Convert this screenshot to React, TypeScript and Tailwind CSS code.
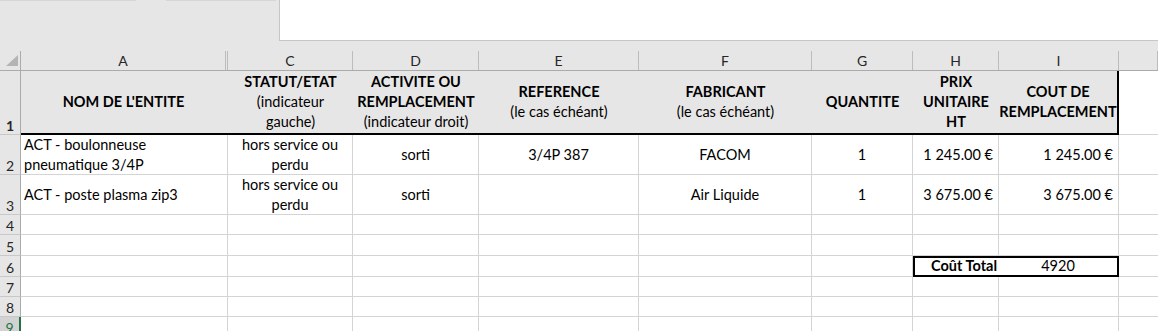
import React from "react"

const cols = "grid grid-cols-[21px_205px_2px_125px_126px_160px_173px_101px_86px_120px_1fr]"

const letters = ["A", "", "C", "D", "E", "F", "G", "H", "I", ""]

type Row = {
  n: number
  h: string
  a?: React.ReactNode
  c?: React.ReactNode
  d?: string
  e?: string
  f?: string
  g?: string
  hh?: string
  i?: string
  total?: boolean
}

const rows: Row[] = [
  {
    n: 2,
    h: "h-[40px]",
    a: (
      <>
        ACT - boulonneuse
        <br />
        pneumatique 3/4P
      </>
    ),
    c: (
      <>
        hors service ou
        <br />
        perdu
      </>
    ),
    d: "sorti",
    e: "3/4P 387",
    f: "FACOM",
    g: "1",
    hh: "1 245.00 €",
    i: "1 245.00 €",
  },
  {
    n: 3,
    h: "h-[40px]",
    a: "ACT - poste plasma zip3",
    c: (
      <>
        hors service ou
        <br />
        perdu
      </>
    ),
    d: "sorti",
    f: "Air Liquide",
    g: "1",
    hh: "3 675.00 €",
    i: "3 675.00 €",
  },
  { n: 4, h: "h-[20px]" },
  { n: 5, h: "h-[21px]" },
  { n: 6, h: "h-[21px]", total: true },
  { n: 7, h: "h-[20px]" },
  { n: 8, h: "h-[20px]" },
]

const cell = "border-r border-b border-[#d4d4d4] flex items-center overflow-hidden whitespace-nowrap"

function RowNum({ n, active }: { n: number; active?: boolean }) {
  return (
    <div
      className={
        "flex items-end justify-center pb-[1px] text-[14px] leading-none border-b border-[#c8c8c8] " +
        (active
          ? "bg-[#d2d2d2] text-[#217346] border-r-2 border-r-[#217346]"
          : "bg-[#e6e6e6] text-[#262626] border-r border-r-[#ababab]")
      }
    >
      {n}
    </div>
  )
}

export default function App() {
  return (
    <div className="w-[1158px] h-[331px] overflow-hidden bg-white text-[#000] font-['Lato','Liberation_Sans',sans-serif]">
      {/* top band */}
      <div className="flex h-[41px]">
        <div className="w-[279px] bg-[#e6e6e6] flex items-start">
          <div className="w-[136px] h-[1px] bg-[#d6d6d6]" />
          <div className="w-[30px]" />
          <div className="w-[110px] h-[1px] bg-[#d6d6d6]" />
        </div>
        <div className="flex-1 bg-white border-l border-b border-[#c6c6c6]" />
      </div>
      <div className="h-[10px] bg-[#e6e6e6]" />

      {/* column letters */}
      <div className={cols + " h-[20px] bg-[#e6e6e6] border-b border-[#ababab]"}>
        <div className="relative border-r border-[#ababab]">
          <svg width="21" height="19" className="absolute left-0 top-0">
            <polygon points="6,15 18,15 18,4" fill="#b4b4b4" />
          </svg>
        </div>
        {letters.map((l, i) => (
          <div
            key={i}
            className="border-r border-[#bcbcbc] flex items-center justify-center text-[14px] text-[#262626] leading-none"
          >
            {l}
          </div>
        ))}
      </div>

      {/* row 1 - headers */}
      <div className={cols + " h-[64px] text-[14.5px] leading-[20px] font-bold"}>
        <RowNum n={1} />
        <div className="bg-[#e7e6e6] border-b-2 border-black flex items-center justify-center">
          NOM DE L'ENTITE
        </div>
        <div className="bg-[#e7e6e6] border-b-2 border-black" />
        <div className="bg-[#e7e6e6] border-b-2 border-black flex flex-col items-center justify-center whitespace-nowrap">
          <span>STATUT/ETAT</span>
          <span className="font-normal">(indicateur</span>
          <span className="font-normal">gauche)</span>
        </div>
        <div className="bg-[#e7e6e6] border-b-2 border-black flex flex-col items-center justify-center whitespace-nowrap">
          <span>ACTIVITE OU</span>
          <span>REMPLACEMENT</span>
          <span className="font-normal">(indicateur droit)</span>
        </div>
        <div className="bg-[#e7e6e6] border-b-2 border-black flex flex-col items-center justify-center whitespace-nowrap">
          <span>REFERENCE</span>
          <span className="font-normal">(le cas échéant)</span>
        </div>
        <div className="bg-[#e7e6e6] border-b-2 border-black flex flex-col items-center justify-center whitespace-nowrap">
          <span>FABRICANT</span>
          <span className="font-normal">(le cas échéant)</span>
        </div>
        <div className="bg-[#e7e6e6] border-b-2 border-black flex items-center justify-center">
          QUANTITE
        </div>
        <div className="bg-[#e7e6e6] border-b-2 border-black flex flex-col items-center justify-center">
          <span>PRIX</span>
          <span>UNITAIRE</span>
          <span>HT</span>
        </div>
        <div className="bg-[#e7e6e6] border-b-2 border-r-2 border-black flex flex-col items-center justify-center whitespace-nowrap">
          <span>COUT DE</span>
          <span>REMPLACEMENT</span>
        </div>
        <div className="border-b border-[#d4d4d4]" />
      </div>

      {/* data rows */}
      {rows.map((r) => (
        <div key={r.n} className={cols + " " + r.h + " text-[14.5px] leading-[20px]"}>
          <RowNum n={r.n} />
          <div className="col-span-2 border-r border-b border-[#d4d4d4] flex items-center pl-[3px] overflow-hidden whitespace-nowrap">
            {r.a}
          </div>
          <div className={cell + " justify-center text-center"}>{r.c}</div>
          <div className={cell + " justify-center"}>{r.d}</div>
          <div className={cell + " justify-center"}>{r.e}</div>
          <div className={cell + " justify-center"}>{r.f}</div>
          <div className={cell + " justify-center"}>{r.g}</div>
          {r.total ? (
            <>
              <div className="border-2 border-r-0 border-black flex items-center justify-end pr-[2px] font-bold leading-none">
                Coût Total
              </div>
              <div className="border-2 border-l-0 border-black flex items-center justify-center leading-none">
                4920
              </div>
            </>
          ) : (
            <>
              <div className={cell + " justify-end pr-[5px]"}>{r.hh}</div>
              <div className={cell + " justify-end pr-[5px]"}>{r.i}</div>
            </>
          )}
          <div className="border-b border-[#d4d4d4]" />
        </div>
      ))}

      {/* row 9 */}
      <div className={cols + " h-[20px] text-[14.5px]"}>
        <RowNum n={9} active />
        <div className="col-span-2 border-r border-[#d4d4d4]" />
        <div className="border-r border-[#d4d4d4]" />
        <div className="border-r border-[#d4d4d4]" />
        <div className="border-r border-[#d4d4d4]" />
        <div className="border-r border-[#d4d4d4]" />
        <div className="border-r border-[#d4d4d4]" />
        <div className="border-r border-[#d4d4d4]" />
        <div className="border-r border-[#d4d4d4]" />
        <div />
      </div>
    </div>
  )
}
